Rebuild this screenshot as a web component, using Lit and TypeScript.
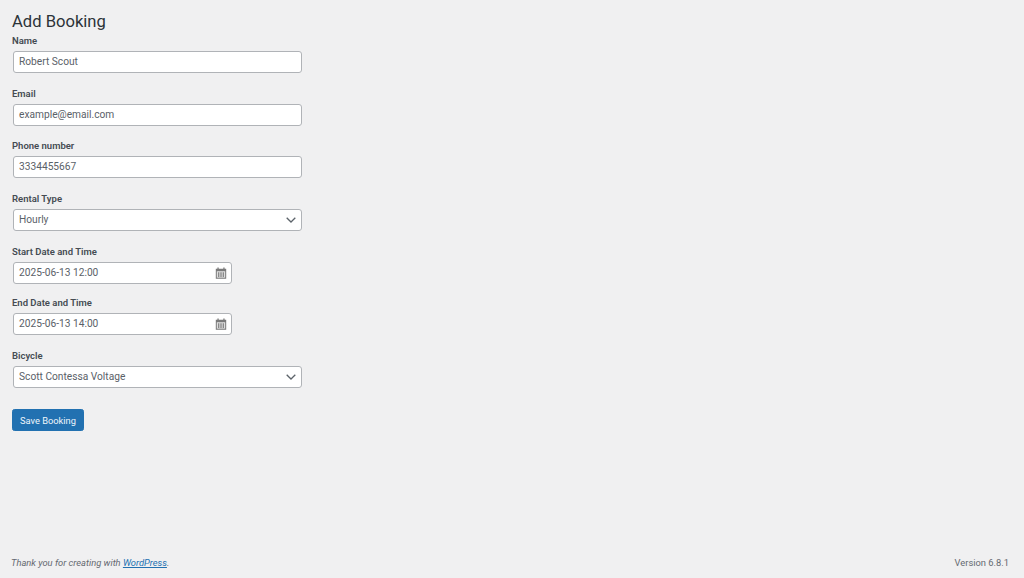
import { LitElement, html, css, svg } from "lit";
import { customElement } from "lit/decorators.js";

const calendar = svg`<svg class="cal" viewBox="0 0 12 12" width="12" height="12" aria-hidden="true">
  <path fill="#7a7a7a" d="M.8 1.800h1.600V.5h1.300v1.300h4.600V.5h1.300v1.300h1.600v9.900H.8z"/>
  <path fill="#dedede" d="M1.800 4.200h8.400v6.500H1.800z"/>
  <path fill="#808080" d="M3.100 5.200h1.200v4.800H3.100zM5.400 5.200h1.200v4.800H5.400zM7.700 5.200h1.200v4.800H7.700z"/>
</svg>`;

const chevron = svg`<svg class="chev" viewBox="0 0 10 6" width="10" height="6" aria-hidden="true">
  <path fill="none" stroke="#5c636a" stroke-width="1.300" d="M.7.800 5 5l4.300-4.200"/>
</svg>`;

@customElement("app-root")
export class AppRoot extends LitElement {
  static styles = css`
    :host {
      display: flex;
      flex-direction: column;
      height: 578px;
      box-sizing: border-box;
      background: #f0f0f1;
      color: #50575e;
      font-family: Roboto, "Liberation Sans", sans-serif;
      overflow: hidden;
    }
    main {
      flex: 1;
      padding: 13px 0 0 12px;
    }
    h1 {
      margin: 0;
      font-size: 16.600px;
      font-weight: 400;
      line-height: 18px;
      color: #2c3338;
    }
    .group {
      display: flex;
      flex-direction: column;
      align-items: flex-start;
      height: 52.600px;
    }
    .group.first {
      margin-top: 4px;
    }
    .group.wide {
      height: 53.400px;
    }
    .group.tight {
      height: 51px;
    }
    label {
      font-weight: 600;
      font-size: 9.500px;
      line-height: 12px;
      height: 13px;
      color: #454c53;
    }
    .field {
      display: flex;
      align-items: center;
      justify-content: space-between;
      box-sizing: border-box;
      width: 288.500px;
      height: 22px;
      margin: 3px 0 0 1px;
      padding: 0 5px 1px;
      background: #fff;
      border: 1px solid #b0b3b7;
      border-radius: 3px;
      color: #5a6168;
      font-size: 10.200px;
    }
    .field.date {
      width: 219px;
    }
    .chev {
      margin: 1px 0 0 0;
    }
    .cal {
      margin: 1px -1px 0 0;
    }
    button {
      display: block;
      box-sizing: border-box;
      width: 72px;
      height: 22px;
      margin-top: 7px;
      padding: 0;
      background: #2271b1;
      border: 1px solid #2271b1;
      border-radius: 2.500px;
      color: #f0f6fb;
      font-family: inherit;
      font-size: 9.300px;
    }
    footer {
      display: flex;
      justify-content: space-between;
      align-items: center;
      padding: 0 15px 9px 11px;
      line-height: 12px;
      font-size: 9.350px;
      color: #646970;
    }
    a {
      color: #2271b1;
    }
  `;

  private group(name: string, value: string, kind = "", extra = "") {
    return html`<div class="group ${extra}">
      <label>${name}</label>
      <div class="field ${kind}">
        <span>${value}</span>
        ${kind === "select" ? chevron : kind === "date" ? calendar : ""}
      </div>
    </div>`;
  }

  render() {
    return html`
      <main>
        <h1>Add Booking</h1>
        ${this.group("Name", "Robert Scout", "", "first")}
        ${this.group("Email", "example@email.com")}
        ${this.group("Phone number", "3334455667")}
        ${this.group("Rental Type", "Hourly", "select", "wide")}
        ${this.group("Start Date and Time", "2025-06-13 12:00", "date", "tight")}
        ${this.group("End Date and Time", "2025-06-13 14:00", "date")}
        ${this.group("Bicycle", "Scott Contessa Voltage", "select")}
        <button>Save Booking</button>
      </main>
      <footer>
        <em>Thank you for creating with <a href="#">WordPress</a>.</em>
        <span>Version 6.8.1</span>
      </footer>
    `;
  }
}
